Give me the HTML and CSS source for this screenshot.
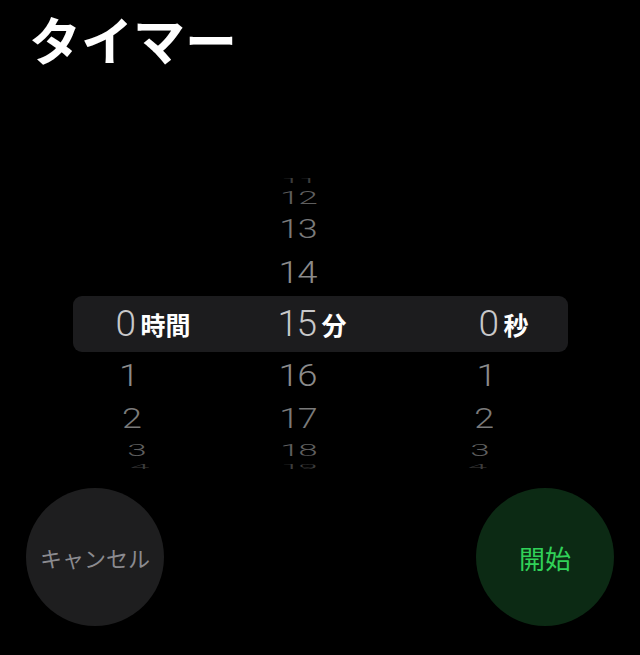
FILE: index.html
```html
<!DOCTYPE html>
<html lang="ja">
<head>
<meta charset="utf-8">
<title>タイマー</title>
<link rel="stylesheet" href="styles.css">
</head>
<body>
<h1 class="title">タイマー</h1>
<div class="picker">
  <div class="row r11"><div class="cells"><span class="cell c-hr"></span><span class="cell c-min"><span class="num">11</span></span><span class="cell c-sec"></span></div></div>
  <div class="row r12"><div class="cells"><span class="cell c-hr"></span><span class="cell c-min"><span class="num">12</span></span><span class="cell c-sec"></span></div></div>
  <div class="row r13"><div class="cells"><span class="cell c-hr"></span><span class="cell c-min"><span class="num">13</span></span><span class="cell c-sec"></span></div></div>
  <div class="row r14"><div class="cells"><span class="cell c-hr"></span><span class="cell c-min"><span class="num">14</span></span><span class="cell c-sec"></span></div></div>
  <div class="row sel"><div class="cells">
    <span class="cell c-hr"><span class="num">0</span><span class="unit">時間</span></span>
    <span class="cell c-min"><span class="num">15</span><span class="unit">分</span></span>
    <span class="cell c-sec"><span class="num">0</span><span class="unit">秒</span></span>
  </div></div>
  <div class="row r16"><div class="cells"><span class="cell c-hr"><span class="num">1</span></span><span class="cell c-min"><span class="num">16</span></span><span class="cell c-sec"><span class="num">1</span></span></div></div>
  <div class="row r17"><div class="cells"><span class="cell c-hr"><span class="num">2</span></span><span class="cell c-min"><span class="num">17</span></span><span class="cell c-sec"><span class="num">2</span></span></div></div>
  <div class="row r18"><div class="cells"><span class="cell c-hr"><span class="num">3</span></span><span class="cell c-min"><span class="num">18</span></span><span class="cell c-sec"><span class="num">3</span></span></div></div>
  <div class="row r19"><div class="cells"><span class="cell c-hr"><span class="num">4</span></span><span class="cell c-min"><span class="num">19</span></span><span class="cell c-sec"><span class="num">4</span></span></div></div>
</div>
<div class="controls">
  <div class="btn btn-cancel">キャンセル</div>
  <div class="btn btn-start">開始</div>
</div>
</body>
</html>
```

FILE: styles.css
```css
html, body {
  margin: 0;
  padding: 0;
  background: #000;
}
body {
  width: 640px;
  height: 655px;
  overflow: hidden;
  font-family: "Noto Sans CJK JP", "Noto Sans", sans-serif;
  color: #fff;
}
.title {
  margin: 0;
  padding: 8px 0 0 29px;
  height: 62px;
  font-size: 52px;
  line-height: 62px;
  font-weight: 700;
  color: #fff;
}
.picker {
  margin-top: 106px;
  height: 296px;
  overflow: hidden;
  display: flex;
  flex-direction: column;
}
.row {
  display: flex;
  align-items: center;
  flex: none;
  width: 495px;
  margin: 0 auto;
}
.cells {
  display: grid;
  grid-template-columns: 165px 165px 165px;
  width: 495px;
  transform-origin: 50% 50%;
}
.cell {
  display: flex;
  align-items: center;
  height: 40px;
}
.num {
  font-family: "Roboto", "Liberation Sans", sans-serif;
  font-weight: 300;
  font-size: 37px;
  line-height: 40px;
  letter-spacing: -1.5px;
  text-align: right;
  flex: none;
}
.c-hr .num { width: 62px; }
.c-min .num { width: 78px; }
.c-sec .num { width: 95px; }
.unit {
  margin-left: 6px;
  font-family: "Noto Sans CJK JP", sans-serif;
  font-weight: 700;
  font-size: 25px;
  line-height: 40px;
  color: #fff;
}
.sel {
  height: 56px;
  background: #1c1c1e;
  border-radius: 9px;
}
.sel .num { color: #c8c8ca; }

.r11 { height: 10px; }
.r11 .cells { transform: scale(0.93, 0.2); color: #3c3c3c; }
.r12 { height: 24px; }
.r12 .cells { transform: scale(0.95, 0.48); color: #5e5e5e; }
.r13 { height: 40px; }
.r13 .cells { transform: scale(0.97, 0.68); color: #7a7a7a; }
.r14 { height: 46px; }
.r14 .cells { transform: scale(0.985, 0.87); color: #8b8b8b; }
.r16 { height: 48px; }
.r16 .cells { transform: scale(0.985, 0.86); color: #8b8b8b; }
.r17 { height: 38px; }
.r17 .cells { transform: scale(0.97, 0.73); color: #7a7a7a; }
.r18 { height: 24px; }
.r18 .cells { transform: scale(0.945, 0.46); color: #5e5e5e; }
.r19 { height: 10px; }
.r19 .cells { transform: scale(0.93, 0.2); color: #3c3c3c; }

.controls {
  display: flex;
  justify-content: space-between;
  padding: 0 26px 0 26px;
  margin-top: 16px;
}
.btn {
  width: 138px;
  height: 138px;
  border-radius: 50%;
  display: flex;
  align-items: center;
  justify-content: center;
  font-family: "Noto Sans CJK JP", sans-serif;
}
.btn-cancel {
  background: #1e1e1f;
  color: #8b8b8f;
  font-size: 22px;
}
.btn-start {
  background: #0c2a14;
  color: #31d158;
  font-size: 26px;
}
```
